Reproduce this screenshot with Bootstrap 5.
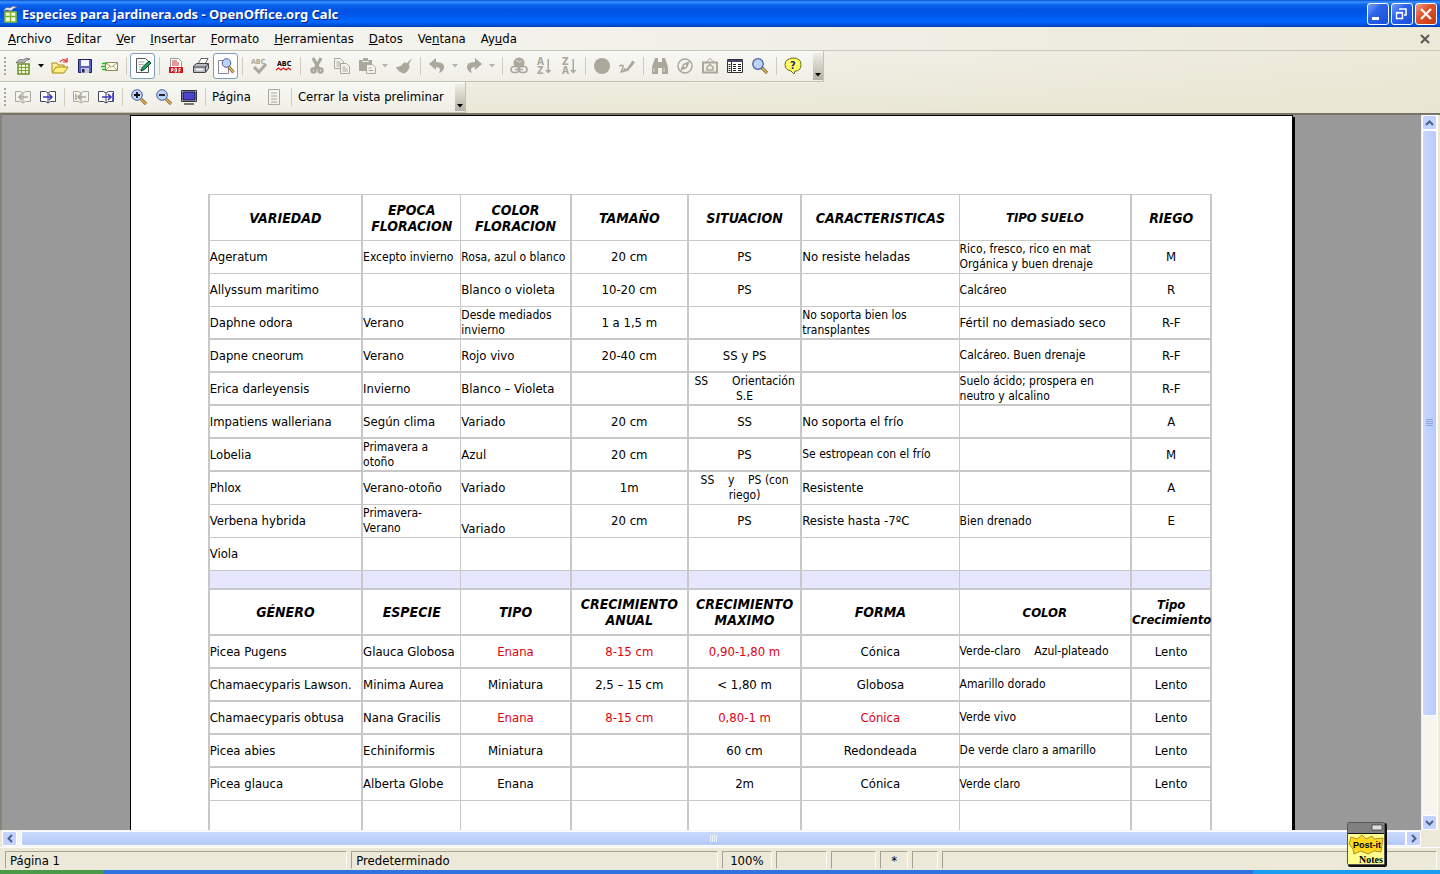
<!DOCTYPE html>
<html lang="es">
<head>
<meta charset="utf-8">
<meta name="viewport" content="width=device-width, initial-scale=1">
<title>Especies para jardinera.ods - OpenOffice.org Calc</title>
<link rel="stylesheet" href="https://cdn.jsdelivr.net/npm/bootstrap@5.3.0/dist/css/bootstrap.min.css">
<style>
:root { --ui: "DejaVu Sans Condensed", "Noto Sans", sans-serif; --grid: #c8c8c8; --face: #ece9d8; }
body { font-family: var(--ui); font-size: 13px; line-height: 16px; color: #000; background: var(--face); }
button { font: inherit; color: inherit; }
.titlebar { height: 27px; padding: 0 3px 0 2px; background: linear-gradient(#0a4fd0 0, #3a93ff 2px, #0a63ee 5px, #0053e1 10px, #0058ea 15px, #0066ff 22px, #0050d8 25px, #003cb0 27px); }
.titlebar h1 { font-family: "Noto Sans", sans-serif; font-size: 13px; font-weight: 700; color: #fff; text-shadow: 1px 1px #0a1f8a; line-height: 18px; }
.winbtn { width: 22px; height: 22px; padding: 0; border: 1px solid #fff; border-radius: 3px; background: linear-gradient(135deg, #7aa0f8, #2a62e8 40%, #1a4fd8); }
.winbtn.shut { background: linear-gradient(135deg, #f0a088, #e0532c 40%, #c8380e); }
.chrome { background: linear-gradient(rgba(236,233,216,0) 30%, rgba(232,229,208,.8)), linear-gradient(90deg, #f6f6f3, #f0efe6 60%, #ece9d8); }
.menus { height: 24px; border-bottom: 1px solid #c9c8bd; padding-left: 8px; padding-right: 9px; gap: 15px; }
.menus a { color: #000; text-decoration: none; }
.strip { height: 31px; width: max-content; padding-left: 10px; border-right: 1px solid #c4c2b2; border-bottom: 1px solid #c4c2b2; background: linear-gradient(#f8f8f5, #efeee6); position: relative; }
.strip::before { content: ""; width: 2px; height: 19px; position: absolute; left: 4px; top: 6px; background: repeating-linear-gradient(#a8a69a 0 2px, transparent 2px 4px); }
.tool { width: 25px; height: 26px; padding: 0; border: 1px solid transparent; background: none; display: flex; align-items: center; justify-content: center; }
.tool.on { background: #fff; border-color: #7f9db9; border-radius: 3px; }
.tool svg { width: 18px; height: 18px; overflow: visible; }
.drop { width: 12px; height: 26px; padding: 0; border: 0; background: none; display: flex; align-items: center; justify-content: center; }
.rule { width: 1px; height: 18px; margin: 0 3px 0 4px; background: #cfccbb; }
.more { width: 10px; height: 27px; padding: 0 0 3px; border: 0; background: linear-gradient(#efeee5, #b4b2a4); display: flex; align-items: end; justify-content: center; }
.txt { padding: 0 3px; border: 0; background: none; }
.view { border-top: 2px solid #77756a; border-left: 2px solid #85837a; min-height: 0; }
.desk { background: #999; overflow: hidden; }
.sheet { width: 82%; margin: 0 9%; background: #fff; border: 1px solid #000; border-bottom: 0; box-shadow: 2px 2px #000; padding: 78px 80px 0 77px; height: 900px; }
.grid { table-layout: fixed; width: 100%; border-collapse: separate; border-spacing: 0; border-top: 1px solid var(--grid); border-left: 2px solid var(--grid); font-size: 13px; line-height: 16px; }
.grid td, .grid th { border: 0 solid var(--grid); border-width: 0 2px 1px 0; padding: 0; vertical-align: middle; height: 33px; white-space: nowrap; }
.grid td:nth-child(2), .grid th:nth-child(2), .grid td:nth-child(6), .grid th:nth-child(6) { border-right-width: 1px; }
.grid th { height: 46px; text-align: center; font-style: italic; font-weight: 700; font-size: 14px; }
.grid .little { font-size: 12px; line-height: 15px; }
.grid th.little { font-size: 13px; }
.grid td:nth-child(4), .grid td:nth-child(5), .grid td:nth-child(8), .conifer td:nth-child(3), .conifer td:nth-child(6) { text-align: center; }
.grid .heavy > * { border-bottom-width: 2px; }
.grid .band td { height: 19px; background: #e6e6ff; }
.warn { color: #e00010; }
.pre { white-space: pre !important; }
.vbar { width: 17px; background: #f6f5f0; border-left: 1px solid #eee; border-right: 1px solid #fff; margin-right: 2px; }
.hbar { height: 17px; background: #f6f5f0; margin: 0 19px 0 2px; padding: 1px 0; }
.arrow { width: 15px; height: 15px; padding: 0; border: 1px solid #fff; border-radius: 2px; background: #c3d3fd; display: flex; align-items: center; justify-content: center; flex: none; }
.thumb { border: 1px solid #fff; border-radius: 2px; display: flex; align-items: center; justify-content: center; }
.vbar .thumb { width: 15px; height: 82%; background: linear-gradient(90deg, #c9d7fe, #b9cbf8); }
.hbar .thumb { flex: 1; background: linear-gradient(#ccdafe, #b4c9f8); }
.status { height: 23px; padding: 3px 3px 1px 5px; gap: 4px; border-top: 1px solid #fff; }
.pane { border: 1px solid; border-color: #a5a294 #fff transparent #a5a294; padding: 1px 4px 0; line-height: 16px; overflow: hidden; }
.taskbar { height: 4px; background: linear-gradient(90deg, #4a9a4a 0 103px, #2f72e0 104px 87%, #1a9cf0 87%); }
.postit { position: absolute; right: 53px; bottom: 7px; width: 40px; height: 45px; padding: 0; border: 0; background: none; }
</style>
</head>
<body class="vh-100 d-flex flex-column overflow-hidden position-relative">
<header class="titlebar d-flex align-items-center flex-shrink-0">
  <svg width="16" height="18" viewBox="0 0 16 18" aria-hidden="true"><path d="M1 6Q4 1 8 3Q11 0 15 2Q11 3 9 6Q5 4 1 6Z" fill="#eee" stroke="#667" stroke-width=".6"/><path d="M3 7h11v10H3z" fill="#f4fbd8" stroke="#8ab830" stroke-width="1.600"/><path d="M3 11.500h11M8.500 7v10" stroke="#7db030" stroke-width="1.500"/></svg>
  <h1 class="mb-0 ms-1 flex-grow-1">Especies para jardinera.ods - OpenOffice.org Calc</h1>
  <div class="d-flex" style="gap:2px">
    <button class="winbtn" aria-label="Minimizar"><svg class="d-block" width="20" height="20"><path d="M4 13h7v3H4z" fill="#fff"/></svg></button>
    <button class="winbtn" aria-label="Restaurar"><svg class="d-block" width="20" height="20" fill="none" stroke="#fff"><path d="M4.500 9h6v5.500h-6zM4 8.500h7" stroke-width="1.400"/><path d="M8 6V5h6v6h-2" stroke-width="1.600"/></svg></button>
    <button class="winbtn shut" aria-label="Cerrar"><svg class="d-block" width="20" height="20"><path d="M5 5l10 10M15 5L5 15" stroke="#fff" stroke-width="2.200"/></svg></button>
  </div>
</header>

<div class="chrome flex-shrink-0">
  <nav class="menus d-flex align-items-center" aria-label="Menú">
    <a href="#"><u>A</u>rchivo</a><a href="#"><u>E</u>ditar</a><a href="#"><u>V</u>er</a><a href="#"><u>I</u>nsertar</a><a href="#"><u>F</u>ormato</a><a href="#"><u>H</u>erramientas</a><a href="#"><u>D</u>atos</a><a href="#">Ve<u>n</u>tana</a><a href="#">Ay<u>u</u>da</a>
    <button class="ms-auto border-0 bg-transparent p-0 lh-1" aria-label="Cerrar documento"><svg class="d-block" width="12" height="10"><path d="M2 1l8 8M10 1L2 9" stroke="#5a5a5a" stroke-width="2"/></svg></button>
  </nav>

  <div class="strip d-flex align-items-center" role="toolbar" aria-label="Estándar">
    <button class="tool" aria-label="Nuevo"><svg viewBox="0 0 18 18"><path d="M2 6Q5 1 9 3Q12 0 16 2Q12 3 10 6Q6 4 2 6Z" fill="#bbb" stroke="#666" stroke-width=".8"/><path d="M4 7h11v10H4z" fill="#f4fbd8" stroke="#6a8f20" stroke-width="1.500"/><path d="M4 10.500h11M4 13.500h11M7.500 7v10M11.500 7v10" stroke="#7aa030"/></svg></button>
    <button class="drop" aria-label="Más tipos"><svg width="6" height="4"><path d="M0 0h6L3 3.500z"/></svg></button>
    <button class="tool" aria-label="Abrir"><svg viewBox="0 0 18 18"><path d="M1 15V6h5l1 2h6v3" fill="#fff3a0" stroke="#a58a10"/><path d="M1 16l4-6h12l-4 6z" fill="#ffee80" stroke="#a58a10"/><path d="M9 5q3-4 6-1M16 1v4h-4" fill="none" stroke="#e02020" stroke-width="1.200"/></svg></button>
    <button class="tool" aria-label="Guardar"><svg viewBox="0 0 18 18"><path d="M2.500 2.500h13v13h-13z" fill="#5f62c0" stroke="#20205a"/><path d="M5 3h8v6H5z" fill="#f4f4fa"/><path d="M5 11h8v5H5z" fill="#c8c8d8"/><path d="M6 12h2.500v3.500H6z" fill="#222262"/></svg></button>
    <button class="tool" aria-label="Correo"><svg viewBox="0 0 18 18"><path d="M4.500 5.500h12v8h-12z" fill="#fffbe0" stroke="#8a8a60"/><path d="M5 6l5.500 4L16 6M5 13l4-4M16 13l-4-4" fill="none" stroke="#a5a580"/><path d="M1 6.500h5M0 9.500h4M1 12.500h4" stroke="#30b030" stroke-width="1.400"/></svg></button>
    <span class="rule"></span>
    <button class="tool on" aria-label="Editar archivo"><svg viewBox="0 0 18 18"><path d="M2.500 1.500h9l3 3v11h-12z" fill="#fff" stroke="#555"/><path d="M4.500 5h6M4.500 7.500h5M4.500 10h3M4.500 12.500h3" stroke="#aaa"/><path d="M7 14l1.500-4L15 4l2 2-6.500 6.500z" fill="#25a05a" stroke="#0a4020"/></svg></button>
    <span class="rule"></span>
    <button class="tool" aria-label="Exportar PDF"><svg viewBox="0 0 18 18"><path d="M3.500 1.500h8l3 3v11h-11z" fill="#fff" stroke="#999"/><path d="M5 4h5M5 6h7M5 8h7" stroke="#c33"/><path d="M2 10h14v6H2z" fill="#d0181c"/><path d="M4.500 15v-3.500h1.500v2H4.500M8 15v-3.500h1.500V15zM12 15.500v-4h2M12 13.500h1.500" stroke="#fff" fill="none" stroke-width=".9"/></svg></button>
    <button class="tool" aria-label="Imprimir"><svg viewBox="0 0 18 18"><path d="M6 7l3-5.500h7L13 7z" fill="#fff" stroke="#666"/><path d="M1.500 9l3-2.500h12v5l-3 4h-12z" fill="#b8bcc4" stroke="#444"/><path d="M2 10h11.500L16 7M13.500 10v5" fill="none" stroke="#444"/><path d="M4 12.500h7" stroke="#fff" stroke-width="1.500"/></svg></button>
    <button class="tool on" aria-label="Vista preliminar"><svg viewBox="0 0 18 18"><path d="M1.500 3.500h10v13h-10z" fill="#fff" stroke="#889"/><path d="M11.500 9.500l5 6" stroke="#7a5a20" stroke-width="3"/><path d="M11.500 9.500l5 6" stroke="#f0c060" stroke-width="1.400"/><circle cx="9.500" cy="6" r="4.300" fill="#bcd4fa" stroke="#4a5a9a"/></svg></button>
    <span class="rule"></span>
    <button class="tool" aria-label="Ortografía"><svg viewBox="0 0 18 18"><text x="1" y="6.500" font-size="7" font-weight="700" fill="#aaa89a">ABC</text><path d="M4 10l5 5 7-8" fill="none" stroke="#aaa89a" stroke-width="3"/></svg></button>
    <button class="tool" aria-label="Revisión automática"><svg viewBox="0 0 18 18"><text x="2" y="9" font-size="7" font-weight="700">ABC</text><path d="M1 13l2.500-2 2.500 2 2.500-2 2.500 2 2.500-2 2.500 2" fill="none" stroke="#e01818" stroke-width="1.300"/></svg></button>
    <span class="rule"></span>
    <button class="tool" aria-label="Cortar"><svg viewBox="0 0 18 18"><path d="M5 1l6 11M13 1L7 12" stroke="#aaa89a" stroke-width="3.200"/><circle cx="5.500" cy="13.500" r="2" fill="none" stroke="#aaa89a" stroke-width="2.500"/><circle cx="12.500" cy="13.500" r="2" fill="none" stroke="#aaa89a" stroke-width="2.500"/></svg></button>
    <button class="tool" aria-label="Copiar"><svg viewBox="0 0 18 18" fill="#f4f3ec" stroke="#aaa89a"><path d="M1.500 1.500h6l3 3v7h-9zM3.500 5h4M3.500 7h5M3.500 9h5"/><path d="M7.500 6.500h6l3 3v7h-9zM9.500 10h3M9.500 12h5M9.500 14h5"/></svg></button>
    <button class="tool" aria-label="Pegar"><svg viewBox="0 0 18 18"><path d="M1 3h4V1h5v2h4v11H1z" fill="#aaa89a"/><path d="M4 4.500h7" stroke="#eee"/><path d="M8.500 7.500h6l3 3v6h-9zM10.500 11h3M10.500 13.500h5" fill="#f4f3ec" stroke="#aaa89a"/></svg></button>
    <button class="drop" aria-label="Opciones de pegar"><svg width="6" height="4"><path d="M0 0h6L3 3.500z" fill="#b5b3a6"/></svg></button>
    <button class="tool" aria-label="Pincel de formato"><svg viewBox="0 0 18 18"><path d="M17 1l-3 6q2 6-5 9.500Q3 15 1 10q5 0 8-4.500l3 .5z" fill="#aaa89a"/></svg></button>
    <span class="rule"></span>
    <button class="tool" aria-label="Deshacer"><svg viewBox="0 0 18 18"><path d="M1 7l7-6v4q9 0 8 6-1 4-5 5 3-6-3-6v3z" fill="#aaa89a"/></svg></button>
    <button class="drop" aria-label="Lista de deshacer"><svg width="6" height="4"><path d="M0 0h6L3 3.500z" fill="#b5b3a6"/></svg></button>
    <button class="tool" aria-label="Restaurar acción"><svg viewBox="0 0 18 18"><path d="M17 7l-7-6v4q-9 0-8 6 1 4 5 5-3-6 3-6v3z" fill="#aaa89a"/></svg></button>
    <button class="drop" aria-label="Lista de restaurar"><svg width="6" height="4"><path d="M0 0h6L3 3.500z" fill="#b5b3a6"/></svg></button>
    <span class="rule"></span>
    <button class="tool" aria-label="Hiperenlace"><svg viewBox="0 0 18 18"><circle cx="9" cy="6" r="5.500" fill="#aaa89a"/><path d="M6 3l3 2 3-1" stroke="#ddd" fill="none"/><g fill="#eee" stroke="#aaa89a" stroke-width="1.600"><rect x="1" y="9.500" width="8" height="6" rx="3"/><rect x="9" y="9.500" width="8" height="6" rx="3"/></g><path d="M5 12.500h8" stroke="#aaa89a" stroke-width="1.500"/></svg></button>
    <button class="tool" aria-label="Orden ascendente"><svg viewBox="0 0 18 18" fill="#aaa89a"><text x="2" y="8" font-size="10" font-weight="700">A</text><text x="2" y="17" font-size="10" font-weight="700">Z</text><path d="M12.500 2h1.500v11h2.500l-3.200 3.500L10 13h2.500z"/></svg></button>
    <button class="tool" aria-label="Orden descendente"><svg viewBox="0 0 18 18" fill="#aaa89a"><text x="2" y="8" font-size="10" font-weight="700">Z</text><text x="2" y="17" font-size="10" font-weight="700">A</text><path d="M12.500 2h1.500v11h2.500l-3.200 3.500L10 13h2.500z"/></svg></button>
    <span class="rule"></span>
    <button class="tool" aria-label="Gráfico"><svg viewBox="0 0 18 18"><circle cx="9" cy="9" r="8" fill="#aaa89a"/></svg></button>
    <button class="tool" aria-label="Funciones de dibujo"><svg viewBox="0 0 18 18"><path d="M1 9q5-2 4 1t-2 5q2 0 4-2" fill="none" stroke="#aaa89a" stroke-width="1.500"/><path d="M5 15l1-4 2.500 1 6-8.500 2.500 2-7 8.500z" fill="#aaa89a"/></svg></button>
    <span class="rule"></span>
    <button class="tool" aria-label="Buscar y reemplazar"><svg viewBox="0 0 18 18"><path d="M4 1h3v4h4V1h3l3 9v7h-6v-6H7v6H1v-7z" fill="#aaa89a"/><path d="M3 11v4M13 11v4" stroke="#ddd"/></svg></button>
    <button class="tool" aria-label="Navegador"><svg viewBox="0 0 18 18"><circle cx="9" cy="9" r="7" fill="none" stroke="#aaa89a" stroke-width="1.500"/><path d="M14 4l-3 7-7 3 3-7z" fill="#aaa89a"/><circle cx="9" cy="9" r="1.200" fill="#f4f3ec"/></svg></button>
    <button class="tool" aria-label="Galería"><svg viewBox="0 0 18 18"><path d="M2 5.500h14v10H2z" fill="#f0efe6" stroke="#aaa89a" stroke-width="2"/><path d="M5 5l4-3.500L13 5" fill="none" stroke="#aaa89a"/><path d="M6 13v-3l3-2.500 3 2.500v3z" fill="none" stroke="#aaa89a" stroke-width="1.500"/></svg></button>
    <button class="tool" aria-label="Fuentes de datos"><svg viewBox="0 0 18 18"><path d="M1.500 2.500h15v13h-15z" fill="#fff" stroke="#333"/><path d="M1 3h16v2H1z" fill="#44466a"/><path d="M5.500 5v10" stroke="#333"/><path d="M2.500 7.500h2M2.500 9.500h2M2.500 11.500h2M2.500 13.500h2M7 7.500h3M7 9.500h3M7 11.500h3M7 13.500h3M12 7.500h3M12 9.500h3M12 11.500h3M12 13.500h3" stroke="#222"/></svg></button>
    <button class="tool" aria-label="Zoom"><svg viewBox="0 0 18 18"><path d="M11 11l5 5" stroke="#6a4a10" stroke-width="3"/><path d="M11 11l5 5" stroke="#f0c060" stroke-width="1.400"/><circle cx="7" cy="7" r="5.300" fill="#bcd4fa" stroke="#4a5a9a" stroke-width="1.200"/></svg></button>
    <span class="rule"></span>
    <button class="tool" aria-label="Ayuda"><svg viewBox="0 0 18 18"><path d="M9 1q8 0 8 6.500T11 14l-1 3-3-3Q1 13 1 7.500T9 1z" fill="#ffff60" stroke="#6a6a20"/><text x="6" y="12" font-size="11" font-weight="700" fill="#26268a">?</text></svg></button>
    <button class="more ms-2" aria-label="Más botones"><svg width="6" height="4"><path d="M0 0h6L3 3.500z"/></svg></button>
  </div>

  <div class="strip d-flex align-items-center" role="toolbar" aria-label="Vista preliminar">
    <button class="tool" aria-label="Página anterior"><svg viewBox="0 0 18 18" fill="none" stroke="#aaa89a"><path d="M1.500 3.500h5L9 5l2.500-1.500h5v10h-5L9 15l-2.500-1.500h-5zM9 5v10"/><path d="M14 9H5M8 6L5 9l3 3" stroke-width="1.500"/></svg></button>
    <button class="tool" aria-label="Página siguiente"><svg viewBox="0 0 18 18" fill="none" stroke="#44445a"><path d="M1.500 3.500h5L9 5l2.500-1.500h5v10h-5L9 15l-2.500-1.500h-5zM9 5v10" fill="#fff"/><path d="M4 9h9M10 6l3 3-3 3" stroke="#3a3ac0" stroke-width="1.500"/></svg></button>
    <span class="rule"></span>
    <button class="tool" aria-label="Primera página"><svg viewBox="0 0 18 18" fill="none" stroke="#aaa89a"><path d="M1.500 3.500h5L9 5l2.500-1.500h5v10h-5L9 15l-2.500-1.500h-5zM9 5v10"/><path d="M14 9H6M9 6L6 9l3 3M4 6v6" stroke-width="1.500"/></svg></button>
    <button class="tool" aria-label="Última página"><svg viewBox="0 0 18 18" fill="none" stroke="#44445a"><path d="M1.500 3.500h5L9 5l2.500-1.500h5v10h-5L9 15l-2.500-1.500h-5zM9 5v10" fill="#fff"/><path d="M5 9h9M11 6l3 3-3 3M16 5v8" stroke="#3a3ac0" stroke-width="1.600"/></svg></button>
    <span class="rule"></span>
    <button class="tool" aria-label="Aumentar"><svg viewBox="0 0 18 18"><path d="M11 11l5 5" stroke="#6a4a10" stroke-width="3"/><path d="M11 11l5 5" stroke="#f0c060" stroke-width="1.400"/><circle cx="7" cy="7" r="5.300" fill="#bcd4fa" stroke="#4a5a9a"/><path d="M7 4v6M4 7h6" stroke="#111" stroke-width="1.800"/></svg></button>
    <button class="tool" aria-label="Reducir"><svg viewBox="0 0 18 18"><path d="M11 11l5 5" stroke="#6a4a10" stroke-width="3"/><path d="M11 11l5 5" stroke="#f0c060" stroke-width="1.400"/><circle cx="7" cy="7" r="5.300" fill="#bcd4fa" stroke="#4a5a9a"/><path d="M4 7h6" stroke="#111" stroke-width="1.800"/></svg></button>
    <button class="tool" aria-label="Pantalla completa"><svg viewBox="0 0 18 18"><path d="M1.500 2.500h15v11h-15z" fill="#c8c8d0" stroke="#333"/><path d="M3 4h12v8H3z" fill="#4a48c8" stroke="#111150"/><path d="M4 16h10" stroke="#777" stroke-width="2"/></svg></button>
    <span class="rule"></span>
    <button class="txt">Página</button>
    <button class="tool ms-2" aria-label="Formato de página"><svg viewBox="0 0 18 18" fill="none" stroke="#aaa89a"><path d="M3.500 1.500h11v15h-11z"/><path d="M6 5h6M6 8h6M6 11h6M6 14h6"/></svg></button>
    <span class="rule"></span>
    <button class="txt">Cerrar la vista preliminar</button>
    <button class="more ms-2" aria-label="Más botones"><svg width="6" height="4"><path d="M0 0h6L3 3.500z"/></svg></button>
  </div>
</div>

<main class="view d-flex flex-grow-1">
  <div class="desk flex-grow-1">
    <div class="sheet">
      <table class="grid">
        <colgroup><col style="width:15.3%"><col style="width:9.8%"><col style="width:11%"><col style="width:11.7%"><col style="width:11.3%"><col style="width:15.7%"><col style="width:17.2%"><col style="width:8%"></colgroup>
        <tbody>
          <tr><th>VARIEDAD</th><th>EPOCA<br>FLORACION</th><th>COLOR<br>FLORACION</th><th>TAMAÑO</th><th>SITUACION</th><th>CARACTERISTICAS</th><th class="little">TIPO SUELO</th><th>RIEGO</th></tr>
          <tr><td>Ageratum</td><td class="little">Excepto invierno</td><td class="little">Rosa, azul o blanco</td><td>20 cm</td><td>PS</td><td>No resiste heladas</td><td class="little">Rico, fresco, rico en mat<br>Orgánica y buen drenaje</td><td>M</td></tr>
          <tr><td>Allyssum maritimo</td><td></td><td>Blanco o violeta</td><td>10-20 cm</td><td>PS</td><td></td><td class="little">Calcáreo</td><td>R</td></tr>
          <tr class="heavy"><td>Daphne odora</td><td>Verano</td><td class="little">Desde mediados<br>invierno</td><td>1 a 1,5 m</td><td></td><td class="little">No soporta bien los<br>transplantes</td><td>Fértil no demasiado seco</td><td>R-F</td></tr>
          <tr class="heavy"><td>Dapne cneorum</td><td>Verano</td><td>Rojo vivo</td><td>20-40 cm</td><td>SS y PS</td><td></td><td class="little">Calcáreo. Buen drenaje</td><td>R-F</td></tr>
          <tr class="heavy"><td>Erica darleyensis</td><td>Invierno</td><td>Blanco – Violeta</td><td></td><td class="little pre">SS       Orientación
S.E</td><td></td><td class="little">Suelo ácido; prospera en<br>neutro y alcalino</td><td>R-F</td></tr>
          <tr class="heavy"><td>Impatiens walleriana</td><td>Según clima</td><td>Variado</td><td>20 cm</td><td>SS</td><td>No soporta el frío</td><td></td><td>A</td></tr>
          <tr class="heavy"><td>Lobelia</td><td class="little">Primavera a<br>otoño</td><td>Azul</td><td>20 cm</td><td>PS</td><td class="little">Se estropean con el frío</td><td></td><td>M</td></tr>
          <tr><td>Phlox</td><td>Verano-otoño</td><td>Variado</td><td>1m</td><td class="little pre">SS    y    PS (con
riego)</td><td>Resistente</td><td></td><td>A</td></tr>
          <tr><td>Verbena hybrida</td><td class="little">Primavera-<br>Verano</td><td class="align-bottom">Variado</td><td>20 cm</td><td>PS</td><td>Resiste hasta -7ºC</td><td class="little">Bien drenado</td><td>E</td></tr>
          <tr><td>Viola</td><td></td><td></td><td></td><td></td><td></td><td></td><td></td></tr>
          <tr class="band heavy"><td></td><td></td><td></td><td></td><td></td><td></td><td></td><td></td></tr>
        </tbody>
        <tbody class="conifer">
          <tr class="heavy"><th>GÉNERO</th><th>ESPECIE</th><th>TIPO</th><th>CRECIMIENTO<br>ANUAL</th><th>CRECIMIENTO<br>MAXIMO</th><th>FORMA</th><th class="little">COLOR</th><th class="little">Tipo<br>Crecimiento</th></tr>
          <tr class="heavy"><td>Picea Pugens</td><td>Glauca Globosa</td><td class="warn">Enana</td><td class="warn">8-15 cm</td><td class="warn">0,90-1,80 m</td><td>Cónica</td><td class="little pre">Verde-claro    Azul-plateado</td><td>Lento</td></tr>
          <tr class="heavy"><td>Chamaecyparis Lawson.</td><td>Minima Aurea</td><td>Miniatura</td><td>2,5 – 15 cm</td><td>&lt; 1,80 m</td><td>Globosa</td><td class="little">Amarillo dorado</td><td>Lento</td></tr>
          <tr class="heavy"><td>Chamaecyparis obtusa</td><td>Nana Gracilis</td><td class="warn">Enana</td><td class="warn">8-15 cm</td><td class="warn">0,80-1 m</td><td class="warn">Cónica</td><td class="little">Verde vivo</td><td>Lento</td></tr>
          <tr class="heavy"><td>Picea abies</td><td>Echiniformis</td><td>Miniatura</td><td></td><td>60 cm</td><td>Redondeada</td><td class="little">De verde claro a amarillo</td><td>Lento</td></tr>
          <tr><td>Picea glauca</td><td>Alberta Globe</td><td>Enana</td><td></td><td>2m</td><td>Cónica</td><td class="little">Verde claro</td><td>Lento</td></tr>
          <tr><td></td><td></td><td></td><td></td><td></td><td></td><td></td><td></td></tr>
        </tbody>
      </table>
    </div>
  </div>
  <div class="vbar d-flex flex-column flex-shrink-0">
    <button class="arrow" aria-label="Subir"><svg width="9" height="6"><path d="M1 5l3.500-3.500L8 5" fill="none" stroke="#4d6185" stroke-width="2"/></svg></button>
    <div class="thumb"><svg width="7" height="8"><path d="M0 .5h7M0 2.500h7M0 4.500h7M0 6.500h7" stroke="#8ca5e0"/></svg></div>
    <button class="arrow mt-auto" aria-label="Bajar"><svg width="9" height="6"><path d="M1 1l3.500 3.500L8 1" fill="none" stroke="#4d6185" stroke-width="2"/></svg></button>
  </div>
</main>
<div class="hbar d-flex flex-shrink-0">
  <button class="arrow" aria-label="Izquierda"><svg width="6" height="9"><path d="M5 1L1.500 4.500 5 8" fill="none" stroke="#4d6185" stroke-width="2"/></svg></button>
  <div class="thumb ms-1"><svg width="8" height="7"><path d="M.5 0v7M2.500 0v7M4.500 0v7M6.500 0v7" stroke="#eef4fe"/></svg></div>
  <button class="arrow" aria-label="Derecha"><svg width="6" height="9"><path d="M1 1l3.500 3.500L1 8" fill="none" stroke="#4d6185" stroke-width="2"/></svg></button>
</div>
<footer class="status d-flex flex-shrink-0">
  <div class="pane" style="width:23.9%">Página 1</div>
  <div class="pane" style="width:25.6%">Predeterminado</div>
  <div class="pane text-center" style="width:3.5%">100%</div>
  <div class="pane" style="width:3.6%"></div>
  <div class="pane" style="width:3.1%"></div>
  <div class="pane text-center" style="width:2%">*</div>
  <div class="pane" style="width:1.8%"></div>
  <div class="pane flex-grow-1"></div>
</footer>
<div class="taskbar flex-shrink-0"></div>

<button class="postit" aria-label="Post-it Notes"><svg class="d-block" width="40" height="45" viewBox="0 0 40 45"><rect x="1" y="1" width="39" height="44" rx="2" fill="#111"/><rect x=".5" y=".5" width="37" height="42" rx="1" fill="#ffff90" stroke="#555"/><path d="M1 1h36v10H1z" fill="#808080"/><path d="M1 11.500h36" stroke="#111"/><path d="M25 3h10v5H25z" fill="#ddd" stroke="#333" stroke-width=".7"/><path d="M2 22l2-7 6 2 5-4 4 4 6-3 2 3 9-1-2 14-7-1-6 3-7-3-7 3-1-5z" fill="#ffd820" stroke="#8a7010" stroke-width=".7"/><text x="6" y="26" font-family="Liberation Sans" font-size="9" font-weight="700">Post-it</text><text x="12" y="41" font-family="Liberation Serif" font-size="10" font-weight="700">Notes</text></svg></button>
<script src="https://cdn.jsdelivr.net/npm/bootstrap@5.3.0/dist/js/bootstrap.bundle.min.js"></script>
</body>
</html>
